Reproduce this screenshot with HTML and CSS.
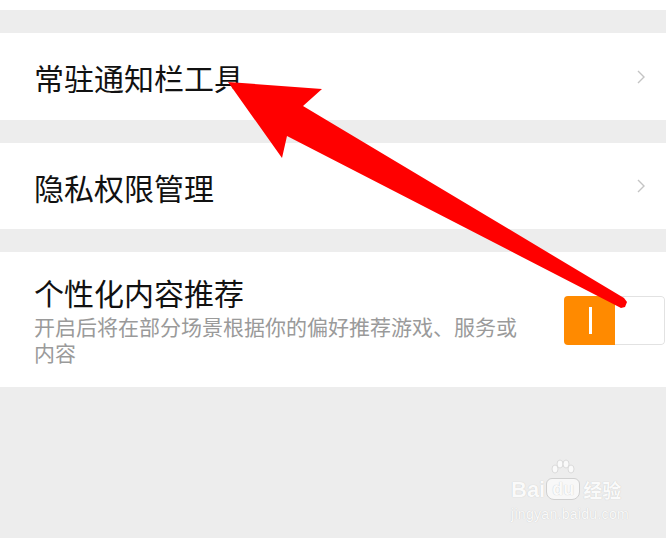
FILE: index.html
```html
<!DOCTYPE html>
<html lang="zh-CN">
<head>
    <meta charset="UTF-8">
    <meta name="viewport" content="width=device-width, initial-scale=1.0">
    <title>设置</title>
    <link rel="stylesheet" href="styles.css">
</head>
<body>
    <div class="page">
        <div class="top-strip"></div>

        <div class="item item-link">
            <span class="item-title">常驻通知栏工具</span>
            <svg class="chevron" width="8" height="14" viewBox="0 0 8 14">
                <polyline points="1,1 7,7 1,13" fill="none" stroke="#c4c4c4" stroke-width="1.4"/>
            </svg>
        </div>

        <div class="item item-link item-short">
            <span class="item-title">隐私权限管理</span>
            <svg class="chevron" width="8" height="14" viewBox="0 0 8 14">
                <polyline points="1,1 7,7 1,13" fill="none" stroke="#c4c4c4" stroke-width="1.4"/>
            </svg>
        </div>

        <div class="item item-switch">
            <div class="item-text">
                <div class="item-title">个性化内容推荐</div>
                <div class="item-desc">开启后将在部分场景根据你的偏好推荐游戏、服务或内容</div>
            </div>
            <div class="toggle">
                <div class="toggle-on"><span class="toggle-bar"></span></div>
                <div class="toggle-off"></div>
            </div>
        </div>

        <!-- red annotation arrow drawn over the screenshot -->
        <svg class="arrow" width="666" height="538" viewBox="0 0 666 538">
            <polygon fill="#ff0000" points="228,82 322,89 303,106 624,298 627,302 625,307 621,308 287,136 282,158"/>
        </svg>

        <div class="watermark">
            <div class="wm-logo">
                <span class="wm-bai">Bai</span>
                <span class="wm-du">
                    <svg class="wm-paw" width="28" height="18" viewBox="0 0 28 18">
                        <ellipse cx="6" cy="10" rx="3" ry="4" fill="#fafafa" stroke="#d4d4d4" stroke-width="0.8"/>
                        <ellipse cx="11" cy="5" rx="3" ry="4" fill="#fafafa" stroke="#d4d4d4" stroke-width="0.8"/>
                        <ellipse cx="17" cy="5" rx="3" ry="4" fill="#fafafa" stroke="#d4d4d4" stroke-width="0.8"/>
                        <ellipse cx="22" cy="10" rx="3" ry="4" fill="#fafafa" stroke="#d4d4d4" stroke-width="0.8"/>
                    </svg>
                    du
                </span>
                <span class="wm-jy">经验</span>
            </div>
            <div class="wm-url">jingyan.baidu.com</div>
        </div>
    </div>
</body>
</html>
```
FILE: styles.css
```css
body {
    margin: 0;
    padding: 0;
    background: #ededed;
    font-family: "Noto Sans CJK SC", "Noto Sans", sans-serif;
    overflow: hidden;
}

.page {
    position: relative;
    width: 666px;
    height: 538px;
}

.top-strip {
    height: 10px;
    background: #fff;
    margin-bottom: 23px;
}

.item {
    display: flex;
    align-items: center;
    background: #fff;
    padding-left: 34px;
    margin-bottom: 23px;
    box-sizing: border-box;
}

.item-link {
    height: 87px;
    padding-right: 21px;
    justify-content: space-between;
}

.item-short {
    height: 86px;
}

.item-title {
    font-size: 30px;
    line-height: 36px;
    color: #111;
}

.item-link .item-title {
    margin-top: 1px;
}

.chevron {
    display: block;
}

.item-switch {
    height: 135px;
    padding-right: 1px;
    gap: 35px;
}

.item-text {
    flex: 1;
}

.item-desc {
    font-size: 21px;
    line-height: 26px;
    color: #9a9a9a;
    margin-top: 3px;
}

.toggle {
    display: flex;
    width: 101px;
    height: 49px;
    border-radius: 4px;
    overflow: hidden;
    margin-top: 1px;
}

.toggle-on {
    width: 51px;
    background: #ff8a00;
    display: flex;
    align-items: center;
    justify-content: center;
}

.toggle-bar {
    width: 3px;
    height: 27px;
    background: #fff;
    margin-left: 2px;
}

.toggle-off {
    flex: 1;
    border: 1px solid #e2e2e2;
    border-left: none;
    border-radius: 0 4px 4px 0;
    background: #fff;
}

.arrow {
    position: absolute;
    top: 0;
    left: 0;
    pointer-events: none;
}

.watermark {
    position: absolute;
    left: 511px;
    top: 466px;
    color: #fafafa;
    font-family: "Liberation Sans", sans-serif;
    text-shadow: 0 0 1px #c0c0c0;
}

.wm-logo {
    display: flex;
    align-items: flex-end;
    height: 34px;
}

.wm-bai {
    font-size: 22px;
    font-weight: bold;
    line-height: 20px;
}

.wm-du {
    position: relative;
    font-size: 18px;
    font-weight: bold;
    line-height: 20px;
    padding: 0 5px;
    margin-left: 1px;
    border: 1px solid #d0d0d0;
    border-radius: 6px 6px 8px 8px;
    background: #f8f8f8;
}

.wm-paw {
    position: absolute;
    left: 2px;
    top: -20px;
}

.wm-jy {
    font-family: "Noto Sans CJK SC", sans-serif;
    font-size: 19px;
    font-weight: bold;
    line-height: 20px;
    margin-left: 3px;
}

.wm-url {
    font-size: 14px;
    line-height: 16px;
    margin-top: 6px;
    letter-spacing: 0.3px;
}
```
